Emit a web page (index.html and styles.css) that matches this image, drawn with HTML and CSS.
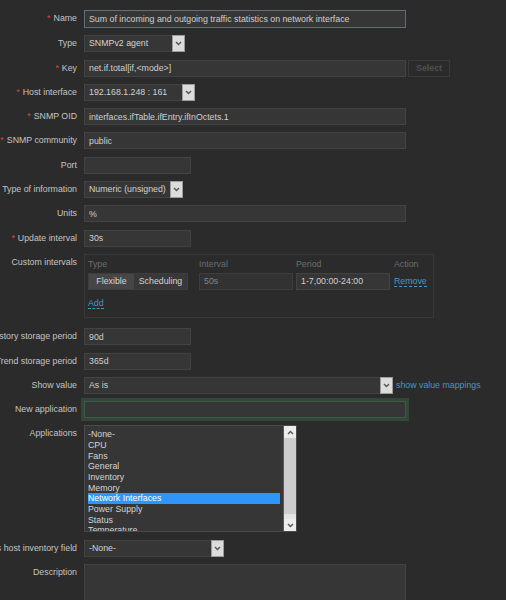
FILE: index.html
```html
<!DOCTYPE html>
<html lang="en">
<head>
    <meta charset="UTF-8">
    <title>Item</title>
    <link rel="stylesheet" href="styles.css">
</head>
<body>
    <div class="form">
        <div class="row">
            <label class="lbl req">Name</label>
            <input class="text wide focus" type="text" value="Sum of incoming and outgoing traffic statistics on network interface">
        </div>
        <div class="row">
            <label class="lbl">Type</label>
            <div class="select w-type"><span class="val">SNMPv2 agent</span><span class="arrow"><svg width="7" height="5" viewBox="0 0 7 5"><polyline points="1,1 3.5,3.5 6,1"/></svg></span></div>
        </div>
        <div class="row">
            <label class="lbl req">Key</label>
            <input class="text wide" type="text" value="net.if.total[if,&lt;mode&gt;]">
            <button class="btn-select" disabled>Select</button>
        </div>
        <div class="row">
            <label class="lbl req">Host interface</label>
            <div class="select w-host"><span class="val">192.168.1.248 : 161</span><span class="arrow"><svg width="7" height="5" viewBox="0 0 7 5"><polyline points="1,1 3.5,3.5 6,1"/></svg></span></div>
        </div>
        <div class="row">
            <label class="lbl req">SNMP OID</label>
            <input class="text wide" type="text" value="interfaces.ifTable.ifEntry.ifInOctets.1">
        </div>
        <div class="row">
            <label class="lbl req">SNMP community</label>
            <input class="text wide" type="text" value="public">
        </div>
        <div class="row">
            <label class="lbl">Port</label>
            <input class="text short" type="text" value="">
        </div>
        <div class="row">
            <label class="lbl">Type of information</label>
            <div class="select w-info"><span class="val">Numeric (unsigned)</span><span class="arrow"><svg width="7" height="5" viewBox="0 0 7 5"><polyline points="1,1 3.5,3.5 6,1"/></svg></span></div>
        </div>
        <div class="row">
            <label class="lbl">Units</label>
            <input class="text wide" type="text" value="%">
        </div>
        <div class="row">
            <label class="lbl req">Update interval</label>
            <input class="text short" type="text" value="30s">
        </div>
        <div class="row row-custom">
            <label class="lbl">Custom intervals</label>
            <div class="intervals">
                <div class="head">Type</div>
                <div class="head">Interval</div>
                <div class="head">Period</div>
                <div class="head">Action</div>
                <div class="segment">
                    <span class="seg on">Flexible</span>
                    <span class="seg">Scheduling</span>
                </div>
                <input class="text cell dim" type="text" value="50s">
                <input class="text cell" type="text" value="1-7,00:00-24:00">
                <a class="link">Remove</a>
                <a class="link add">Add</a>
            </div>
        </div>
        <div class="row">
            <label class="lbl">History storage period</label>
            <input class="text short" type="text" value="90d">
        </div>
        <div class="row">
            <label class="lbl">Trend storage period</label>
            <input class="text short" type="text" value="365d">
        </div>
        <div class="row">
            <label class="lbl">Show value</label>
            <div class="select w-show"><span class="val">As is</span><span class="arrow"><svg width="7" height="5" viewBox="0 0 7 5"><polyline points="1,1 3.5,3.5 6,1"/></svg></span></div>
            <a class="link mappings">show value mappings</a>
        </div>
        <div class="row">
            <label class="lbl">New application</label>
            <input class="text wide glow" type="text" value="">
        </div>
        <div class="row">
            <label class="lbl">Applications</label>
            <div class="listbox">
                <ul class="options">
                    <li>-None-</li>
                    <li>CPU</li>
                    <li>Fans</li>
                    <li>General</li>
                    <li>Inventory</li>
                    <li>Memory</li>
                    <li class="selected">Network Interfaces</li>
                    <li>Power Supply</li>
                    <li>Status</li>
                    <li>Temperature</li>
                </ul>
                <div class="scrollbar">
                    <span class="sb-btn"><svg width="7" height="5" viewBox="0 0 7 5"><polyline points="1,4 3.5,1.5 6,4"/></svg></span>
                    <span class="sb-thumb"></span>
                    <span class="sb-btn"><svg width="7" height="5" viewBox="0 0 7 5"><polyline points="1,1 3.5,3.5 6,1"/></svg></span>
                </div>
            </div>
        </div>
        <div class="row">
            <label class="lbl">Populates host inventory field</label>
            <div class="select w-inv"><span class="val">-None-</span><span class="arrow"><svg width="7" height="5" viewBox="0 0 7 5"><polyline points="1,1 3.5,3.5 6,1"/></svg></span></div>
        </div>
        <div class="row">
            <label class="lbl">Description</label>
            <textarea class="text wide area"></textarea>
        </div>
    </div>
</body>
</html>
```

FILE: styles.css
```css
body {
    margin: 0;
    height: 600px;
    overflow: hidden;
    background-color: #2b2b2b;
    font-family: "Liberation Sans", Arial, sans-serif;
    font-size: 8.8px;
    color: #c4c4c4;
}
.form {
    display: flex;
    flex-direction: column;
    gap: 7.3px;
    padding-top: 10px;
}
.row {
    display: flex;
    align-items: flex-start;
    gap: 7px;
}
.row-custom {
    margin-bottom: 3px;
}
.lbl {
    width: 77px;
    flex: none;
    display: flex;
    justify-content: flex-end;
    white-space: nowrap;
    line-height: 17px;
}
.req::before {
    content: "*";
    color: #e0413e;
    margin-right: 3px;
}

/* text fields */
.text {
    box-sizing: border-box;
    height: 17px;
    margin: 0;
    padding: 0 4px;
    background: #363636;
    border: 1px solid #434343;
    color: #cfcfcf;
    font-family: inherit;
    font-size: 8.8px;
    outline: none;
}
.wide {
    width: 322px;
}
.short {
    width: 107px;
}
.focus {
    height: 18px;
    border-color: #5f707b;
}
.glow {
    box-shadow: 0 0 0 3px #32463a;
    border-color: #3c5a44;
}
.area {
    height: 70px;
    resize: none;
}
.btn-select {
    box-sizing: border-box;
    height: 17px;
    width: 42px;
    margin-left: -5px;
    padding: 0;
    background: #2b2b2b;
    border: 1px solid #3a3a3a;
    color: #505050;
    font-family: inherit;
    font-size: 8.8px;
    font-weight: bold;
}

/* selects */
.select {
    box-sizing: border-box;
    height: 17px;
    display: flex;
    justify-content: space-between;
    background: #363636;
    border: 1px solid #434343;
}
.select .val {
    padding-left: 4px;
    line-height: 15px;
    color: #d2d2d2;
    white-space: nowrap;
}
.arrow {
    box-sizing: border-box;
    width: 13px;
    height: 17px;
    margin: -1px -1px -1px 0;
    display: flex;
    align-items: center;
    justify-content: center;
    background: #dcdcdc;
    border: 1px solid #9c9c9c;
}
.arrow polyline,
.sb-btn polyline {
    fill: none;
    stroke: #555;
    stroke-width: 1.4;
}
.w-type { width: 101px; }
.w-host { width: 111px; }
.w-info { width: 99px; }
.w-show { width: 309px; }
.w-inv { width: 140px; }

.link {
    color: #4796c4;
    border-bottom: 1px dashed #4796c4;
    line-height: 10px;
    cursor: pointer;
}
.mappings {
    margin-left: -4px;
    margin-top: 3px;
    border-bottom: none;
}

/* custom intervals */
.intervals {
    box-sizing: border-box;
    width: 350px;
    display: grid;
    grid-template-columns: 111px 97px 98px auto;
    row-gap: 3px;
    padding: 3px 4px 8px 3px;
    border: 1px solid #383838;
}
.head {
    line-height: 12px;
    color: #6d6d6d;
}
.segment {
    display: flex;
    width: 100px;
    height: 17px;
    box-sizing: border-box;
    border: 1px solid #3e3e3e;
    background: #383838;
}
.seg {
    line-height: 15px;
    text-align: center;
    color: #d4d4d4;
}
.seg:first-child {
    width: 45px;
}
.seg:last-child {
    flex: 1;
}
.seg.on {
    background: #464646;
}
.cell {
    width: 94px;
}
.dim {
    background: #323232;
    color: #858585;
    border-color: #3d3d3d;
}
.intervals .link {
    justify-self: start;
    align-self: center;
}
.intervals .add {
    grid-column: 1;
    margin-top: 5px;
}

/* applications list */
.listbox {
    box-sizing: border-box;
    width: 213px;
    height: 107px;
    display: flex;
    background: #363636;
    border: 1px solid #4a4a4a;
    overflow: hidden;
}
.options {
    flex: 1;
    margin: 0;
    padding: 3px 3px 0 3px;
    list-style: none;
}
.options li {
    line-height: 10.67px;
    height: 10.67px;
    color: #d4d4d4;
    white-space: nowrap;
}
.options li.selected {
    background: #2f95f9;
    color: #fff;
}
.scrollbar {
    width: 12px;
    display: flex;
    flex-direction: column;
    background: #e4e4e4;
    border-left: 1px solid #5a5a5a;
}
.sb-btn {
    height: 12px;
    display: flex;
    align-items: center;
    justify-content: center;
    background: #ececec;
}
.sb-thumb {
    flex: 1;
    margin-bottom: 5px;
    background: #cdcdcd;
}
```
